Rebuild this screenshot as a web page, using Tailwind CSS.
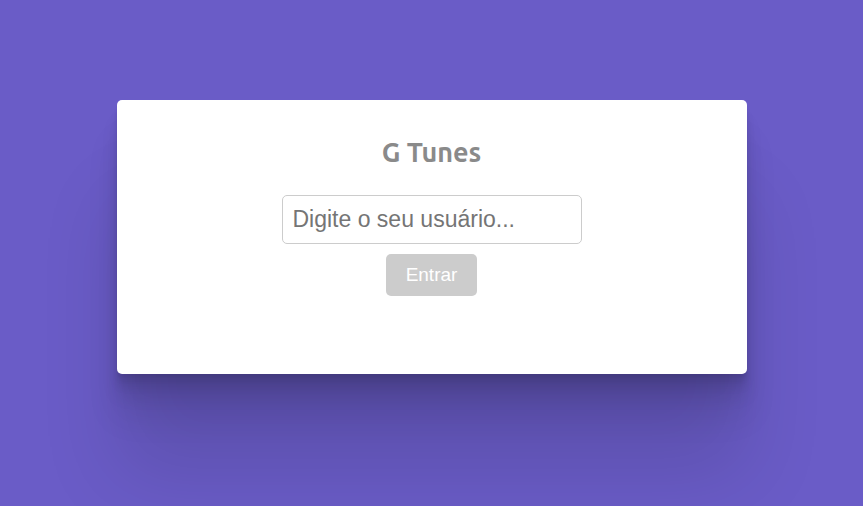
<!DOCTYPE html>
<html lang="pt-BR">
<head>
<meta charset="utf-8">
<meta name="viewport" content="width=device-width, initial-scale=1">
<title>G Tunes</title>
<script src="https://cdn.jsdelivr.net/npm/@tailwindcss/browser@4"></script>
</head>
<body class="min-h-screen bg-[#6a5cc7] px-6 pt-[100px] pb-12 font-['Liberation_Sans',Arial,sans-serif]">
<main class="mx-auto flex w-full max-w-[630px] flex-col items-center rounded-[5px] bg-white px-6 pt-9 pb-[78px] shadow-[0_3px_2px_rgba(0,0,0,0.034),0_7px_5px_rgba(0,0,0,0.048),0_13px_10px_rgba(0,0,0,0.06),0_22px_18px_rgba(0,0,0,0.072),0_42px_33px_rgba(0,0,0,0.086),0_100px_80px_rgba(0,0,0,0.12)]">
<h1 class="font-[Ubuntu,'Open_Sans',sans-serif] text-[27px] leading-8 font-bold text-[#8a8a8a]">G Tunes</h1>
<form class="mt-[27px] flex w-full flex-col items-center gap-[10px]">
<input type="text" aria-label="Usuário" placeholder="Digite o seu usuário..." class="h-[49px] w-full max-w-[300px] rounded-[5px] border border-[#cccccc] bg-white px-[10px] text-[23px] text-[#757575] placeholder:text-[#757575]">
<button type="button" class="rounded-[5px] bg-[#cccccc] px-5 py-2 text-[19px] leading-[26px] text-white">Entrar</button>
</form>
</main>
</body>
</html>
